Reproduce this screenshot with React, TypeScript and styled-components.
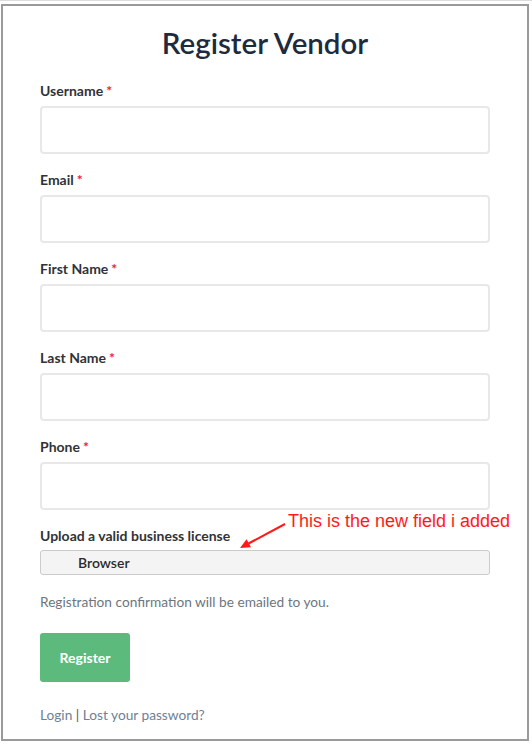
import { FC } from 'react'
import styled, { createGlobalStyle } from 'styled-components'

const GlobalStyle = createGlobalStyle`
  html, body {
    margin: 0;
    padding: 0;
    background: #fff;
  }
  body {
    font-family: Lato, "Open Sans", sans-serif;
    color: #333;
  }
  * {
    box-sizing: border-box;
  }
`

const TopRule = styled.div`
  height: 1px;
  background: #dcdcdc;
`

const Frame = styled.div`
  margin: 3px 0 0 1px;
  width: 528px;
  height: 737px;
  border: 2px solid #9a9a9a;
  padding: 17px 37px 0;
`

const Title = styled.h1`
  margin: 0 0 19px;
  text-align: center;
  font-family: Lato, sans-serif;
  font-size: 29.5px;
  font-weight: 600;
  line-height: 40px;
  color: #1d2b3c;
`

const Form = styled.form`
  display: flex;
  flex-direction: column;
`

const FieldGroup = styled.div<{ $gap?: number }>`
  position: relative;
  display: flex;
  flex-direction: column;
  gap: ${(p) => p.$gap ?? 6}px;
  margin-bottom: 17px;
`

const Label = styled.label`
  font-size: 14px;
  font-weight: 700;
  line-height: 18px;
  color: #2f3338;
`

const Required = styled.span`
  color: #e8262b;
  margin-left: 3px;
`

const TextInput = styled.input`
  display: block;
  width: 100%;
  height: 48px;
  border: 2px solid #e8e8e8;
  border-radius: 4px;
  background: #fff;
  outline: none;
`

const FileBox = styled.div`
  display: flex;
  align-items: center;
  height: 25px;
  padding-left: 37px;
  border: 1px solid #cbcbcb;
  border-radius: 3px;
  background: #f4f4f4;
  font-size: 14px;
  font-weight: 600;
  color: #2b2b2b;
`

const Help = styled.p`
  margin: 1px 0 22px;
  font-size: 13.7px;
  line-height: 18px;
  color: #6c7680;
`

const SubmitButton = styled.button`
  width: 90px;
  height: 49px;
  border: none;
  border-radius: 3px;
  background: #5cbb7c;
  color: #fff;
  font-family: Lato, sans-serif;
  font-size: 14px;
  font-weight: 700;
  cursor: pointer;
`

const Links = styled.div`
  margin-top: 24px;
  font-size: 13.7px;
  line-height: 18px;
  color: #555;
`

const Link = styled.a`
  color: #6d8196;
  text-decoration: none;
`

const Annotation = styled.div`
  position: absolute;
  left: 196px;
  top: -18px;
  width: 300px;
  height: 44px;
  pointer-events: none;
`

const AnnotationText = styled.span`
  position: absolute;
  left: 52px;
  top: 2px;
  font-family: "Liberation Sans", Arial, sans-serif;
  font-size: 18px;
  line-height: 20px;
  color: #ff1a1a;
  white-space: nowrap;
`

const ArrowSvg = styled.svg`
  position: absolute;
  left: 0;
  top: 0;
`

const fields = ['Username', 'Email', 'First Name', 'Last Name', 'Phone']

const App: FC = () => {
  return (
    <>
      <GlobalStyle />
      <TopRule />
      <Frame>
        <Title>Register Vendor</Title>
        <Form onSubmit={(e) => e.preventDefault()}>
          {fields.map((name) => (
            <FieldGroup key={name}>
              <Label>
                {name}
                <Required>*</Required>
              </Label>
              <TextInput type="text" />
            </FieldGroup>
          ))}

          <FieldGroup $gap={5}>
            <Label>Upload a valid business license</Label>
            <FileBox>Browser</FileBox>
            <Annotation>
              <ArrowSvg width="60" height="44" viewBox="0 0 60 44">
                <line x1="49" y1="15" x2="12.5" y2="34.5" stroke="#ff1a1a" strokeWidth="2" />
                <polygon points="4,39 15,38.2 10.6,30.2" fill="#ff1a1a" />
              </ArrowSvg>
              <AnnotationText>This is the new field i added</AnnotationText>
            </Annotation>
          </FieldGroup>

          <Help>Registration confirmation will be emailed to you.</Help>

          <div>
            <SubmitButton type="submit">Register</SubmitButton>
          </div>

          <Links>
            <Link href="#">Login</Link> | <Link href="#">Lost your password?</Link>
          </Links>
        </Form>
      </Frame>
    </>
  )
}

export default App
